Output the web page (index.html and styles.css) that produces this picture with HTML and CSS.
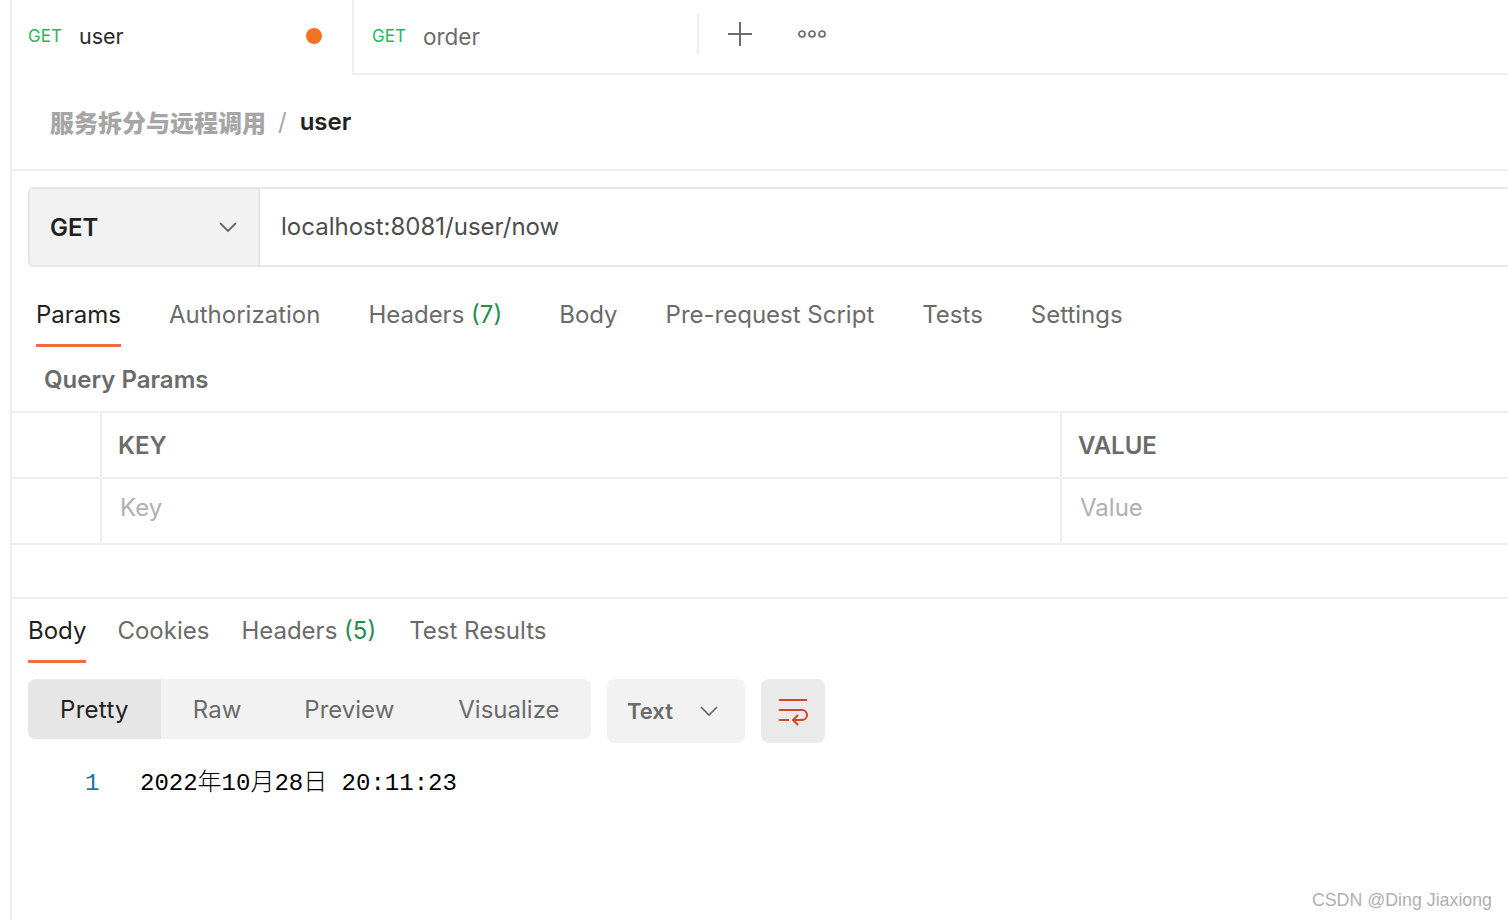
FILE: index.html
```html
<!DOCTYPE html>
<html lang="en">
<head>
  <meta charset="UTF-8">
  <title>user</title>
  <link rel="stylesheet" href="styles.css">
</head>
<body>
  <div class="workspace">
    <div class="tabbar">
      <div class="tab tab-active">
        <span class="tab-method">GET</span>
        <span class="tab-name">user</span>
        <span class="tab-dot"></span>
      </div>
      <div class="tab tab-idle">
        <span class="tab-method">GET</span>
        <span class="tab-name">order</span>
      </div>
      <div class="tab-tools">
        <svg class="icon-plus" width="26" height="26" viewBox="0 0 26 26"><path d="M13 1v24M1 13h24" stroke="#6b6b6b" stroke-width="2" fill="none"/></svg>
        <svg class="icon-more" width="30" height="10" viewBox="0 0 30 10"><g fill="none" stroke="#6b6b6b" stroke-width="1.7"><circle cx="5" cy="5" r="3"/><circle cx="15" cy="5" r="3"/><circle cx="25" cy="5" r="3"/></g></svg>
      </div>
    </div>

    <div class="crumbs">
      <span class="crumb-parent">服务拆分与远程调用</span>
      <span class="crumb-sep">/</span>
      <span class="crumb-current">user</span>
    </div>

    <div class="urlbar">
      <div class="method">
        <span>GET</span>
        <svg width="20" height="12" viewBox="0 0 20 12"><path d="M2 2l8 8 8-8" stroke="#666" stroke-width="1.8" fill="none"/></svg>
      </div>
      <div class="url">localhost:8081/user/now</div>
    </div>

    <div class="req-tabs">
      <span class="req-tab req-tab-on">Params</span>
      <span class="req-tab">Authorization</span>
      <span class="req-tab req-tab-wide">Headers <em>(7)</em></span>
      <span class="req-tab">Body</span>
      <span class="req-tab">Pre-request Script</span>
      <span class="req-tab">Tests</span>
      <span class="req-tab">Settings</span>
    </div>

    <div class="section-title">Query Params</div>

    <div class="params">
      <div class="params-row params-head">
        <div class="cell"></div>
        <div class="cell">KEY</div>
        <div class="cell">VALUE</div>
      </div>
      <div class="params-row params-empty">
        <div class="cell"></div>
        <div class="cell">Key</div>
        <div class="cell">Value</div>
      </div>
    </div>

    <div class="response">
      <div class="res-tabs">
        <span class="res-tab res-tab-on">Body</span>
        <span class="res-tab">Cookies</span>
        <span class="res-tab res-tab-count">Headers <em>(5)</em></span>
        <span class="res-tab">Test Results</span>
      </div>
      <div class="res-tools">
        <div class="segments">
          <span class="segment segment-on">Pretty</span>
          <span class="segment">Raw</span>
          <span class="segment">Preview</span>
          <span class="segment">Visualize</span>
        </div>
        <div class="format">
          <span>Text</span>
          <svg width="20" height="12" viewBox="0 0 20 12"><path d="M2 2l8 8 8-8" stroke="#666" stroke-width="1.6" fill="none"/></svg>
        </div>
        <div class="wrap-btn">
          <svg width="30" height="28" viewBox="0 0 30 28"><g stroke="#d9441a" stroke-width="2" fill="none"><path d="M1 2h28M1 12h23a4.500 4.500 0 0 1 0 10H15M1 22h10M20 17l-5 5 5 5"/></g></svg>
        </div>
      </div>
      <div class="code">
        <span class="line-no">1</span>
        <span class="line-text">2022年10月28日 20:11:23</span>
      </div>
    </div>
  </div>
  <div class="watermark">CSDN @Ding Jiaxiong</div>
</body>
</html>
```

FILE: styles.css
```css
html, body { margin: 0; padding: 0; }
body { width: 1508px; height: 920px; overflow: hidden; background: #fff; font-family: Inter, "Noto Sans CJK SC", sans-serif; font-size: 24px; color: #6b6b6b; position: relative; }
em { font-style: normal; color: #1f8f4b; }

.workspace { margin-left: 10px; height: 920px; border-left: 2px solid #eeeeee; }

.tabbar { display: flex; height: 75px; }
.tab { display: flex; align-items: center; box-sizing: border-box; padding-bottom: 3px; }
.tab-active { width: 342px; padding-left: 16px; border-right: 2px solid #eeeeee; }
.tab-idle { width: 343px; padding-left: 18px; padding-bottom: 1px; border-bottom: 2px solid #eeeeee; }
.tab-method { font-size: 17px; color: #1fb85c; width: 51px; }
.tab-name { font-size: 21.500px; }
.tab-idle .tab-name { font-size: 22.500px; }
.tab-active .tab-name { color: #2b2b2b; }
.tab-dot { width: 16px; height: 16px; border-radius: 50%; background: #f47322; margin-left: auto; margin-right: 30px; }
.tab-tools { flex: 1; display: flex; align-items: flex-start; border-bottom: 2px solid #eeeeee; }
.tab-tools::before { content: ""; width: 2px; height: 40px; margin-top: 14px; background: #eeeeee; }
.icon-plus { margin: 21px 0 0 28px; }
.icon-more { margin: 29px 0 0 44px; }

.crumbs { display: flex; align-items: center; height: 92px; padding-left: 38px; padding-bottom: 2px; border-bottom: 2px solid #eeeeee; }
.crumb-parent { font-weight: 900; color: #a6a6a6; }
.crumb-sep { margin: 0 13px 0 12px; color: #a6a6a6; }
.crumb-current { font-weight: 600; color: #212121; }

.urlbar { display: flex; height: 80px; margin: 16px 0 0 16px; box-sizing: border-box; border: 2px solid #e6e6e6; border-right: 0; border-radius: 5px 0 0 5px; }
.method { display: flex; align-items: center; justify-content: space-between; width: 230px; box-sizing: border-box; padding: 0 20px; background: #f2f2f2; border-right: 2px solid #e6e6e6; font-weight: 600; color: #212121; }
.url { display: flex; align-items: center; padding-left: 21px; padding-bottom: 1px; color: #4d4d4d; }

.req-tabs { display: flex; height: 80px; padding-left: 24px; gap: 48px; }
.req-tab { height: 80px; box-sizing: border-box; border-bottom: 3px solid transparent; padding-top: 32px; line-height: 32px; }
.req-tab-on { color: #212121; border-bottom-color: #f26b3a; }
.req-tab-wide { margin-right: 9px; }

.section-title { height: 64px; padding: 16px 0 0 32px; box-sizing: border-box; font-weight: 600; line-height: 34px; }

.params { border-top: 2px solid #eeeeee; }
.params-row { display: grid; grid-template-columns: 88px 960px 1fr; border-bottom: 2px solid #eeeeee; height: 66px; box-sizing: border-box; }
.cell { display: flex; align-items: center; padding-left: 16px; }
.cell + .cell { border-left: 2px solid #eeeeee; }
.params-head .cell { font-weight: 600; }
.params-empty .cell { color: #b0b0b0; padding-left: 18px; padding-bottom: 8px; }

.response { margin-top: 52px; border-top: 2px solid #eeeeee; padding-left: 16px; }
.res-tabs { display: flex; gap: 32px; height: 64px; }
.res-tab { height: 64px; box-sizing: border-box; padding-top: 16px; line-height: 32px; border-bottom: 3px solid transparent; }
.res-tab-on { color: #212121; border-bottom-color: #f26b3a; margin-right: -1px; }
.res-tab-count { margin-right: 1px; }

.res-tools { display: flex; align-items: flex-start; gap: 16px; margin-top: 16px; }
.segments { display: flex; width: 563px; height: 60px; background: #f2f2f2; border-radius: 8px; overflow: hidden; }
.segment { display: flex; align-items: center; padding: 0 32px; }
.segment-on { letter-spacing: 0.3px; background: #e6e6e6; color: #212121; }
.segment-on + .segment { padding-right: 31px; }
.format { display: flex; align-items: center; justify-content: space-between; width: 138px; height: 64px; box-sizing: border-box; padding: 0 26px 0 20px; background: #f2f2f2; border-radius: 8px; font-weight: 600; font-size: 22px; }
.wrap-btn { display: flex; align-items: center; justify-content: center; width: 64px; height: 64px; box-sizing: border-box; padding-top: 2px; background: #ebebeb; border-radius: 8px; }

.code { display: flex; margin-top: 25px; font-family: "Liberation Mono", "Noto Sans CJK SC", monospace; font-size: 24px; font-weight: 300; line-height: 32px; color: #000; }
.line-no { padding-left: 57px; width: 55px; color: #1d75a3; }

.watermark { position: absolute; right: 16px; top: 888px; font-family: "Liberation Sans", sans-serif; font-size: 17.800px; color: #b0b0b0; line-height: 24px; }
```
